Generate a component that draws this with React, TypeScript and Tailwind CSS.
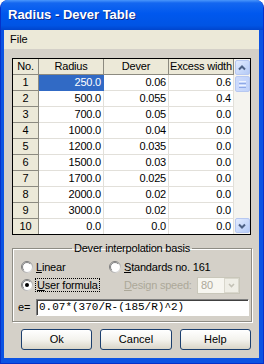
import React from "react";

const rows = [
  ["1", "250.0", "0.06", "0.6"],
  ["2", "500.0", "0.055", "0.4"],
  ["3", "700.0", "0.05", "0.0"],
  ["4", "1000.0", "0.04", "0.0"],
  ["5", "1200.0", "0.035", "0.0"],
  ["6", "1500.0", "0.03", "0.0"],
  ["7", "1700.0", "0.025", "0.0"],
  ["8", "2000.0", "0.02", "0.0"],
  ["9", "3000.0", "0.02", "0.0"],
  ["10", "0.0", "0.0", "0.0"],
];

function Radio({ checked }: { checked?: boolean }) {
  return (
    <svg width="12" height="12" viewBox="0 0 12 12" className="shrink-0">
      <defs>
        <linearGradient id="rb" x1="0" y1="0" x2="1" y2="1">
          <stop offset="0" stopColor="#6d6d6d" />
          <stop offset="0.5" stopColor="#8a8a8a" />
          <stop offset="1" stopColor="#f4f4f4" />
        </linearGradient>
      </defs>
      <circle cx="6" cy="6" r="5.5" fill="#fff" stroke="url(#rb)" />
      <circle cx="6" cy="6" r="4.5" fill="none" stroke="#404040" strokeWidth="0.6" strokeDasharray="14 20" transform="rotate(135 6 6)" />
      {checked && <circle cx="6" cy="6" r="2" fill="#000" />}
    </svg>
  );
}

function ScrollBtn({ up }: { up?: boolean }) {
  return (
    <div className="w-[15px] h-[15px] mx-auto rounded-[2px] border border-[#b7c8f1] bg-gradient-to-br from-[#e3ecff] to-[#b4caf6] flex items-center justify-center">
      <svg width="8" height="6" viewBox="0 0 8 6">
        <path d={up ? "M1 4.5 L4 1.5 L7 4.5" : "M1 1.5 L4 4.5 L7 1.5"} fill="none" stroke="#4d6185" strokeWidth="2" />
      </svg>
    </div>
  );
}

export default function App() {
  return (
    <div className="w-[264px] h-[364px] bg-white font-['Liberation_Sans',Arial,sans-serif] text-[11px] text-black">
      <div className="flex flex-col h-full rounded-t-[8px] bg-[#0b53e3] border-x border-b border-[#0631c9]">
        {/* title bar */}
        <div className="h-[30px] shrink-0 rounded-t-[7px] bg-[linear-gradient(to_bottom,#4a96fb_0%,#1467f0_10%,#0058ee_45%,#0054e4_85%,#0045cd_100%)] flex items-center pl-[7px]">
          <span className="text-white font-bold text-[13px] [text-shadow:1px_1px_#0b2a8a]">Radius - Dever Table</span>
        </div>
        <div className="flex-1 flex flex-col pl-[3px] pr-[4px] pb-[5px]">
          {/* menu */}
          <div className="h-[19px] shrink-0 bg-[#ece9d8] flex items-center pl-[4px]">
            <span className="px-[2px]">File</span>
          </div>
          {/* client */}
          <div className="flex-1 bg-[#d4d0c8] px-[8px] pt-[9px] flex flex-col">
            <div className="w-[239px] h-[177px] border border-black bg-white flex tracking-[-0.2px]">
              <div className="grid grid-cols-[26px_65px_65px_65px] content-start">
                {["No.", "Radius", "Dever", "Excess width"].map((h) => (
                  <div key={h} className="h-[16px] bg-[#ece9d8] border-r border-b border-[#8c8a80] flex items-center justify-center whitespace-nowrap overflow-hidden">
                    {h}
                  </div>
                ))}
                {rows.map((r, i) => (
                  <React.Fragment key={r[0]}>
                    <div className={i === 9 ? "h-[15px] bg-[#ece9d8] border-r border-[#8c8a80] flex items-center justify-center" : "h-[16px] bg-[#ece9d8] border-r border-b border-[#8c8a80] flex items-center justify-center"}>
                      {r[0]}
                    </div>
                    {r.slice(1).map((v, j) => (
                      <div
                        key={j}
                        className={
                          (i === 9 ? "h-[15px] border-r " : "h-[16px] border-r border-b ") +
                          (i === 0 && j === 0 ? "bg-[#316ac5] text-white border-[#316ac5] " : "border-[#e2e0da] ") +
                          "flex items-center justify-end pr-[2px]"
                        }
                      >
                        {v}
                      </div>
                    ))}
                  </React.Fragment>
                ))}
              </div>
              {/* scrollbar */}
              <div className="w-[16px] bg-[#f5f4ef] flex flex-col pt-px pb-px">
                <ScrollBtn up />
                <div className="w-[15px] h-[16px] mx-auto mt-px rounded-[2px] border border-[#b7c8f1] bg-gradient-to-r from-[#cddbfc] to-[#c0d2fa] flex flex-col items-center justify-center gap-[1px]">
                  <div className="w-[7px] h-px bg-[#eef3fe]" />
                  <div className="w-[7px] h-px bg-[#8fa9e6]" />
                  <div className="w-[7px] h-px bg-[#eef3fe]" />
                  <div className="w-[7px] h-px bg-[#8fa9e6]" />
                </div>
                <div className="flex-1" />
                <ScrollBtn />
              </div>
            </div>

            {/* group box */}
            <fieldset className="mt-[6px] w-[240px] border border-[#8e8c84] shadow-[inset_1px_1px_0_#fff,1px_1px_0_#fff] px-[8px] pb-[5px]">
              <legend className="mx-auto px-[2px] leading-[14px] tracking-[-0.2px]">Dever interpolation basis</legend>
              <div className="tracking-[-0.2px]">
                <div className="h-[18px] mt-[3px] flex items-center">
                  <div className="w-[88px] flex items-center gap-[3px]">
                    <Radio />
                    <span><u>L</u>inear</span>
                  </div>
                  <div className="flex items-center gap-[3px]">
                    <Radio />
                    <span><u>S</u>tandards no. 161</span>
                  </div>
                </div>
                <div className="h-[18px] flex items-center">
                  <div className="w-[103px] flex items-center gap-[2px]">
                    <Radio checked />
                    <span className="border border-dotted border-black px-px leading-[12px]"><u>U</u>ser formula</span>
                  </div>
                  <span className="text-[#aca899]"><u>D</u>esign speed:</span>
                  <div className="ml-auto mr-[3px] w-[43px] h-[17px] border border-[#c9c7ba] bg-[#f7f6f0] flex items-center">
                    <span className="flex-1 pl-[3px] text-[#aca899]">80</span>
                    <div className="w-[15px] h-[15px] border border-[#d9d7cc] bg-[#efeee6] flex items-center justify-center">
                      <svg width="7" height="5" viewBox="0 0 7 5">
                        <path d="M1 1 L3.5 3.5 L6 1" fill="none" stroke="#c3c1b5" strokeWidth="1.6" />
                      </svg>
                    </div>
                  </div>
                </div>
                <div className="mt-[5px] -ml-[3px] -mr-[6px] flex items-center">
                  <span className="w-[18px]">e=</span>
                  <div className="flex-1 h-[17px] border-t border-l border-t-[#808080] border-l-[#808080] border-b border-r border-b-white border-r-white shadow-[inset_1px_1px_0_#404040] bg-white flex items-center pl-[2px] font-['Liberation_Mono','Courier_New',monospace] text-[11px] tracking-normal">
                    0.07*(370/R-(185/R)^2)
                  </div>
                </div>
              </div>
            </fieldset>

            {/* buttons */}
            <div className="mt-[7px] pl-[9px] flex gap-[8px]">
              {["Ok", "Cancel", "Help"].map((b) => (
                <button
                  key={b}
                  className="w-[72px] h-[21px] rounded-[3px] border border-[#1c3f6e] bg-gradient-to-b from-[#ffffff] via-[#f4f3ee] to-[#d9d5c8] text-[11px] flex items-center justify-center"
                >
                  {b}
                </button>
              ))}
            </div>
          </div>
        </div>
      </div>
    </div>
  );
}
